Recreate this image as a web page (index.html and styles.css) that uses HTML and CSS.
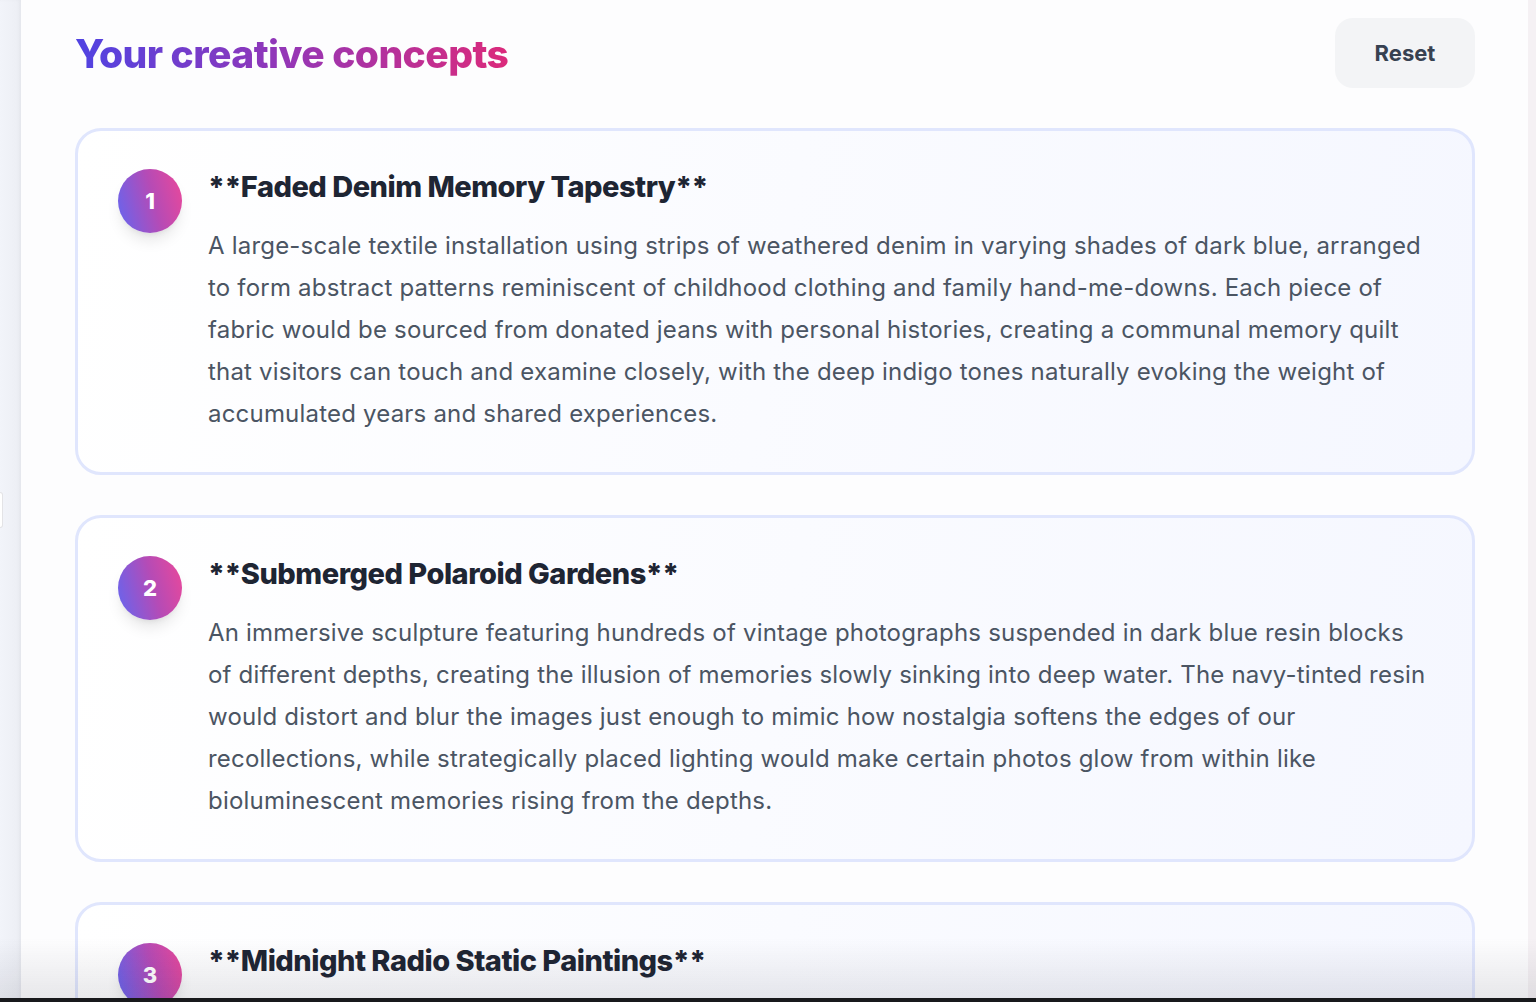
FILE: index.html
```html
<!DOCTYPE html>
<html lang="en">
<head>
    <meta charset="UTF-8">
    <meta name="viewport" content="width=device-width, initial-scale=1.0">
    <title>Creative concepts</title>
    <link rel="stylesheet" href="styles.css">
</head>
<body>

    <div class="shell">
        <aside class="rail-left"><span class="rail-tab"></span></aside>

        <main class="panel">
            <header class="panel-head">
                <h1 class="title">Your creative concepts</h1>
                <button type="button" class="btn-reset">Reset</button>
            </header>

            <section class="concepts">
                <article class="concept">
                    <div class="badge">1</div>
                    <div class="concept-body">
                        <h2>**Faded Denim Memory Tapestry**</h2>
                        <p>A large-scale textile installation using strips of weathered denim in varying shades of dark blue, arranged to form abstract patterns reminiscent of childhood clothing and family hand-me-downs. Each piece of fabric would be sourced from donated jeans with personal histories, creating a communal memory quilt that visitors can touch and examine closely, with the deep indigo tones naturally evoking the weight of accumulated years and shared experiences.</p>
                    </div>
                </article>

                <article class="concept">
                    <div class="badge">2</div>
                    <div class="concept-body">
                        <h2>**Submerged Polaroid Gardens**</h2>
                        <p>An immersive sculpture featuring hundreds of vintage photographs suspended in dark blue resin blocks of different depths, creating the illusion of memories slowly sinking into deep water. The navy-tinted resin would distort and blur the images just enough to mimic how nostalgia softens the edges of our recollections, while strategically placed lighting would make certain photos glow from within like bioluminescent memories rising from the depths.</p>
                    </div>
                </article>

                <article class="concept">
                    <div class="badge">3</div>
                    <div class="concept-body">
                        <h2>**Midnight Radio Static Paintings**</h2>
                        <p>A series of layered canvases in deep blue and black, textured to echo the grain of late-night radio static.</p>
                    </div>
                </article>
            </section>
        </main>

        <aside class="rail-right"></aside>
    </div>

    <div class="fade-bottom"></div>

</body>
</html>
```

FILE: styles.css
```css
* {
    box-sizing: border-box;
}
body {
    margin: 0;
    font-family: Inter, "Noto Sans", Arial, sans-serif;
    background: #f3f4f8;
    height: 100vh;
    overflow: hidden;
}
.shell {
    display: flex;
    height: 100vh;
}
.rail-left {
    width: 21px;
    flex-shrink: 0;
    background: linear-gradient(to right, #f2f4fa, #eceef4);
    box-shadow: inset -2px 0 3px rgba(0, 0, 0, 0.03);
    display: flex;
    align-items: center;
    padding-top: 18px;
}
.rail-tab {
    width: 3px;
    height: 36px;
    background: #ffffff;
    border: 1px solid #e3e3e6;
    border-left: none;
    border-radius: 0 3px 3px 0;
}
.rail-right {
    width: 8px;
    flex-shrink: 0;
    background: #f5f1f4;
}
.panel {
    flex: 1;
    background: #fdfdfe;
    padding: 18px 53px 0 54px;
    overflow: hidden;
}
.panel-head {
    display: flex;
    align-items: center;
    justify-content: space-between;
    height: 70px;
    margin-bottom: 40px;
}
.title {
    margin: 0;
    font-size: 39px;
    font-weight: 800;
    letter-spacing: -0.55px;
    background: linear-gradient(90deg, #5043e2, #9636b5 50%, #db2a7b);
    -webkit-background-clip: text;
    background-clip: text;
    color: transparent;
}
.btn-reset {
    width: 140px;
    height: 70px;
    border: none;
    border-radius: 18px;
    background: #f3f4f6;
    color: #374151;
    font-family: inherit;
    font-size: 22px;
    font-weight: 700;
    cursor: pointer;
}
.concepts {
    display: flex;
    flex-direction: column;
    gap: 40px;
}
.concept {
    display: flex;
    gap: 26px;
    padding: 38px 40px 37px;
    border: 3px solid #e0e6fd;
    border-radius: 26px;
    background: linear-gradient(100deg, #ffffff, #f5f7ff);
}
.badge {
    width: 64px;
    height: 64px;
    flex-shrink: 0;
    border-radius: 50%;
    background: linear-gradient(75deg, #6366f1, #b54bb6 55%, #ec4899);
    box-shadow: 0 10px 15px -3px rgba(0, 0, 0, 0.1), 0 4px 6px -4px rgba(0, 0, 0, 0.1);
    color: #ffffff;
    font-size: 22px;
    font-weight: 800;
    display: flex;
    align-items: center;
    justify-content: center;
}
.concept-body h2 {
    margin: 0 0 20px;
    font-size: 29px;
    line-height: 36px;
    font-weight: 800;
    letter-spacing: -0.5px;
    color: #1e2533;
}
.concept-body p {
    margin: 0;
    font-size: 24px;
    line-height: 42px;
    letter-spacing: 0.2px;
    color: #4b5563;
}
.fade-bottom {
    position: fixed;
    left: 0;
    right: 0;
    bottom: 0;
    height: 64px;
    background: linear-gradient(to bottom, rgba(40, 40, 60, 0), rgba(40, 40, 60, 0.1));
    border-bottom: 4px solid #18191c;
    pointer-events: none;
}
```
